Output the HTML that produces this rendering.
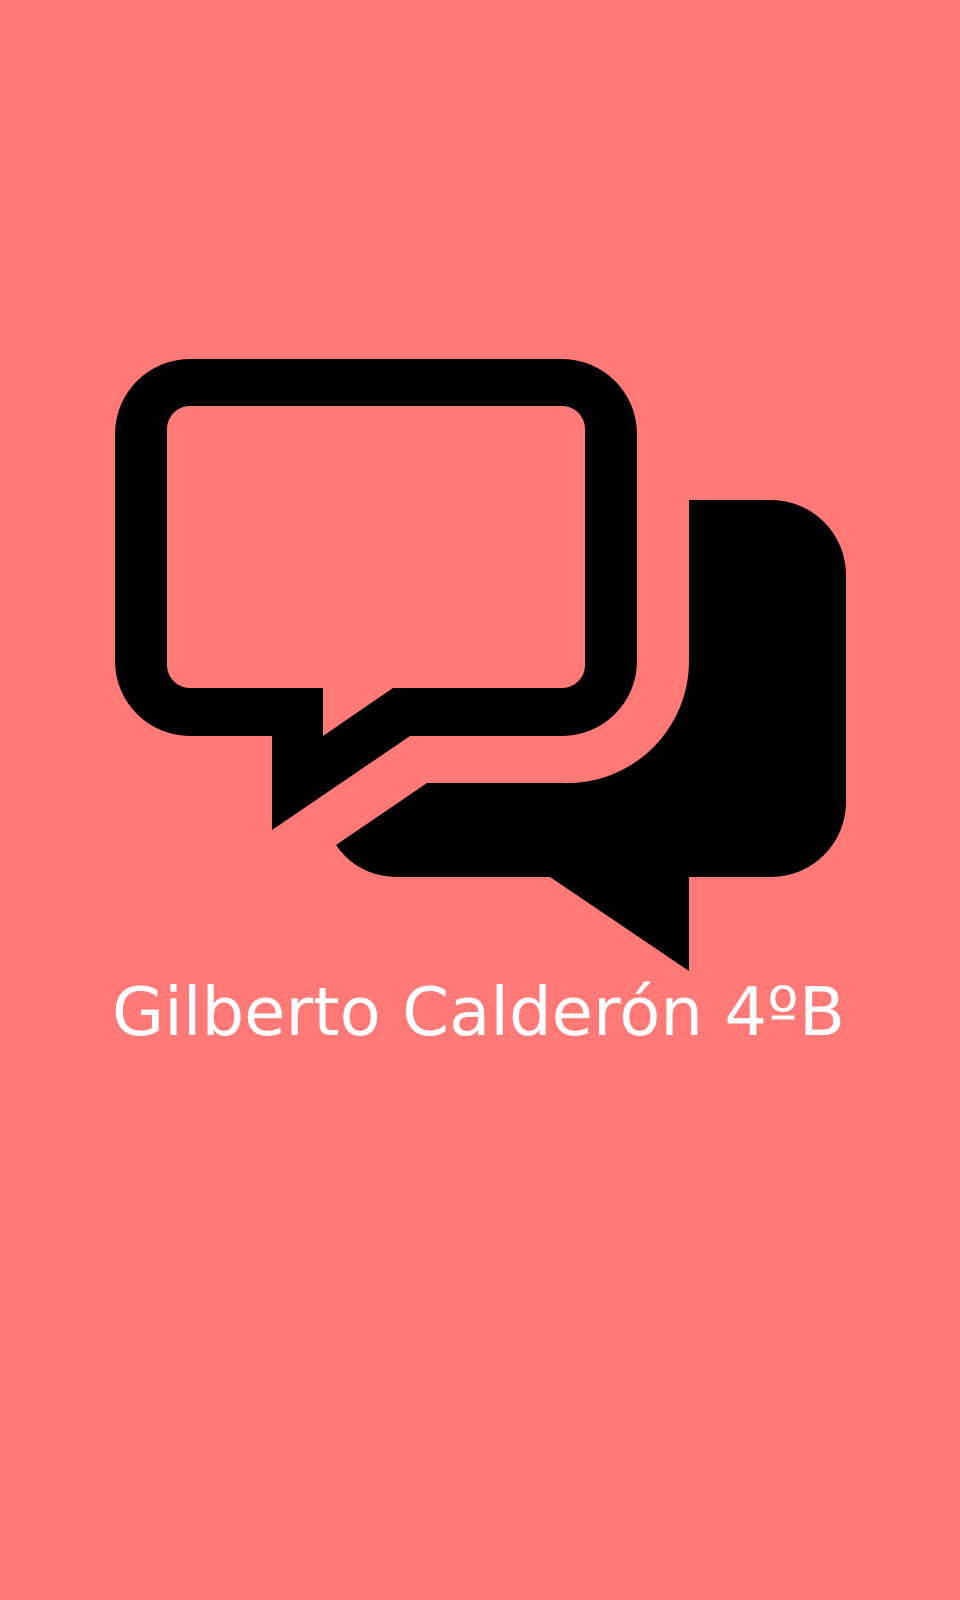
<!DOCTYPE html>
<html><head><meta charset="utf-8"><style>
html,body{margin:0;padding:0;background:#ff7977;width:960px;height:1600px;overflow:hidden}
</style></head><body>
<svg width="960" height="1600" viewBox="0 0 960 1600" xmlns="http://www.w3.org/2000/svg">
<rect width="960" height="1600" fill="#ff7977"/>
<path fill="#000" fill-rule="evenodd" d="
M190 359 H562 A75 75 0 0 1 637 434 V661 A75 75 0 0 1 562 736 H410 L272 830 V736 H190 A75 75 0 0 1 115 661 V434 A75 75 0 0 1 190 359 Z
M190 406 A23 23 0 0 0 167 429 V665 A23 23 0 0 0 190 688 H323 V736 L393 688 H562 A23 23 0 0 0 585 665 V429 A23 23 0 0 0 562 406 Z"/>
<path fill="#000" d="
M689 500 H771 A75 75 0 0 1 846 575 V802 A75 75 0 0 1 771 877 H689 V971 L550 877 H399 Q358 877 336 845 L427 783 H562 A122 122 0 0 0 689 661 Z"/>
<text x="112" y="1035" font-family="DejaVu Sans, Liberation Sans, sans-serif" font-size="67" fill="#fff" textLength="733" lengthAdjust="spacingAndGlyphs">Gilberto Calderón 4ºB</text>
</svg>
</body></html>
